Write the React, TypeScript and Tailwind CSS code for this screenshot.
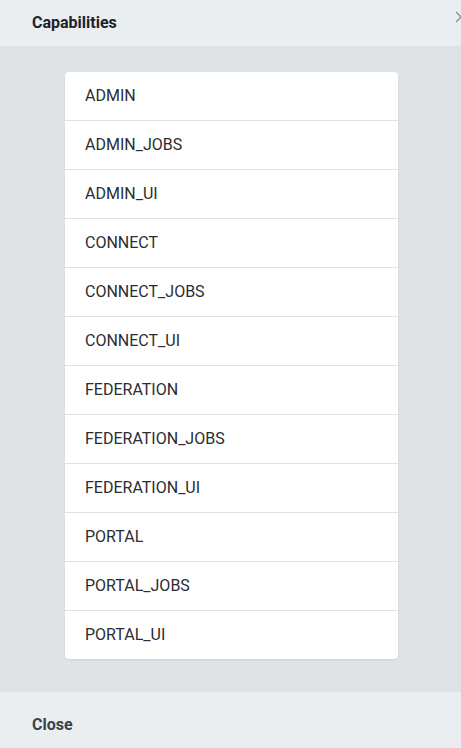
const capabilities = [
  "ADMIN",
  "ADMIN_JOBS",
  "ADMIN_UI",
  "CONNECT",
  "CONNECT_JOBS",
  "CONNECT_UI",
  "FEDERATION",
  "FEDERATION_JOBS",
  "FEDERATION_UI",
  "PORTAL",
  "PORTAL_JOBS",
  "PORTAL_UI",
];

export default function App() {
  return (
    <div
      className="flex h-[748px] w-[461px] flex-col overflow-hidden bg-[#dfe3e6]"
      style={{ fontFamily: "Roboto, 'Liberation Sans', sans-serif" }}
    >
      <div className="relative h-[46px] shrink-0 bg-[#eaeef1] px-8 pt-[13px]">
        <h2 className="text-[16px] font-bold leading-5 text-[#1e2228]">Capabilities</h2>
        <button className="absolute left-[455px] top-[11px] text-[#8a9097]">
          <svg width="12" height="12" viewBox="0 0 12 12" fill="none" stroke="currentColor" strokeWidth="1.3">
            <path d="M1 1l10 10M11 1L1 11" />
          </svg>
        </button>
      </div>
      <div className="flex-1 pl-[65px] pt-[26px]">
        <ul className="w-[333px] rounded bg-white shadow-[0_1px_2px_rgba(0,0,0,0.08)]">
          {capabilities.map((c, i) => (
            <li
              key={c}
              className={`flex h-[48px] items-center pl-[20px] text-[16px] text-[#2a2d32] ${
                i < capabilities.length - 1 ? "box-content border-b border-[#dfe2e5]" : ""
              }`}
            >
              {c}
            </li>
          ))}
        </ul>
      </div>
      <div className="h-[56px] shrink-0 bg-[#eaeef1] px-8 pt-[21px]">
        <button className="text-[16px] font-bold leading-5 text-[#3a424c]">Close</button>
      </div>
    </div>
  );
}
